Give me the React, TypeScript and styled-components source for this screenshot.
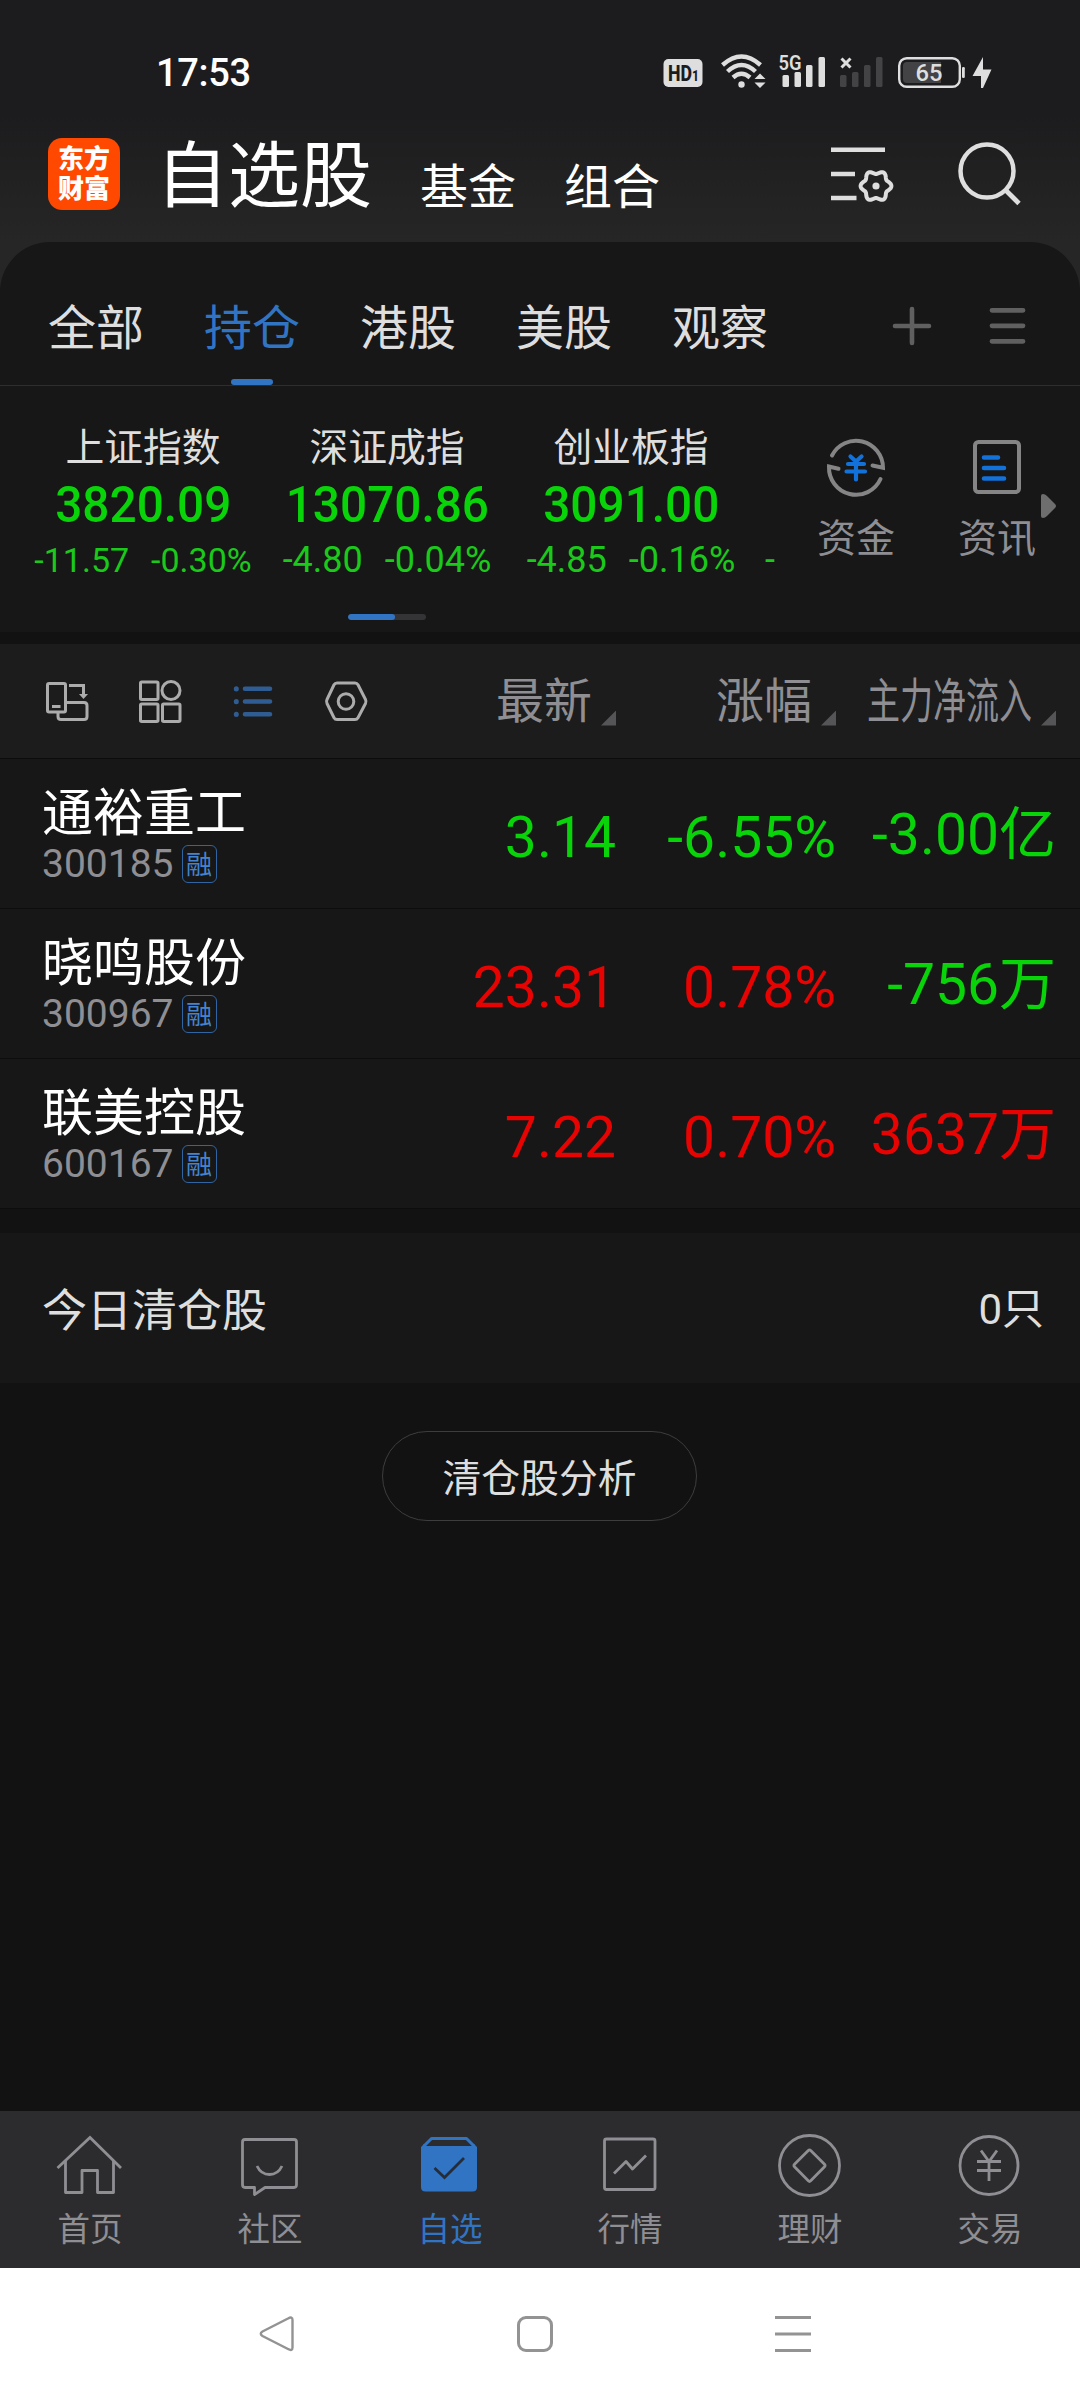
import React from "react";
import styled, { createGlobalStyle } from "styled-components";

const CJK = `"Noto Sans CJK SC", sans-serif`;
const NUM = `Roboto, "Noto Sans CJK SC", sans-serif`;

const color = {
  blue: "#3274c4",
  green: "#09d309",
  red: "#e60302",
  text: "#dedede",
  muted: "#8e8e93",
  panel: "#171717",
  page: "#121212",
};

const GlobalStyle = createGlobalStyle`
  * { box-sizing: border-box; }
  body { margin: 0; background: ${color.page}; }
  svg { display: block; flex: none; }
`;

const Screen = styled.div`
  width: 1080px;
  height: 2400px;
  display: flex;
  flex-direction: column;
  background: ${color.page};
  font-family: ${CJK};
  color: ${color.text};
  overflow: hidden;
  white-space: nowrap;
`;

/* ---------- top area ---------- */

const Top = styled.div`
  background: linear-gradient(#1c1c1e 0, #1c1c1e 112px, #262626 242px, #262626 300px);
`;

const StatusBar = styled.div`
  height: 115px;
  padding: 0 88px 0 156px;
  display: flex;
  justify-content: space-between;
`;

const Clock = styled.div`
  margin-top: 54px;
  font: 500 38px/38px ${NUM};
  letter-spacing: -0.3px;
  color: #fff;
`;

const Header = styled.header`
  height: 127px;
  display: flex;
  align-items: flex-start;
  padding-left: 48px;
`;

const Logo = styled.div`
  margin-top: 23px;
  width: 72px;
  height: 72px;
  border-radius: 14px;
  background: #ff4800;
  color: #fff;
  padding-top: 4px;
  text-align: center;
  font: 900 26px/30px ${CJK};
`;

const Title = styled.div<{ $size: number; $top: number; $left: number }>`
  margin: ${(p) => p.$top}px 0 0 ${(p) => p.$left}px;
  font-size: ${(p) => p.$size}px;
  line-height: ${(p) => p.$size}px;
  color: #fff;
`;

const HeaderIcons = styled.div`
  margin: 25px 0 0 auto;
  padding-right: 54px;
  display: flex;
  gap: 62px;
`;

/* ---------- groups + indices ---------- */

const Panel = styled.section`
  height: 390px;
  background: ${color.panel};
  border-radius: 50px 50px 0 0;
`;

const Tabs = styled.nav`
  height: 144px;
  border-bottom: 1px solid #2e2e2f;
  padding: 0 54px 0 48px;
  display: flex;
  gap: 60px;
`;

const Tab = styled.div<{ $active?: boolean }>`
  display: flex;
  flex-direction: column;
  align-items: center;
  justify-content: space-between;
  padding-top: 58px;
  font-size: 48px;
  line-height: 48px;
  color: ${(p) => (p.$active ? color.blue : color.text)};
`;

const TabMark = styled.div`
  width: 42px;
  height: 6px;
  border-radius: 3px;
  background: ${color.blue};
`;

const TabIcons = styled.div`
  margin: 63px 0 0 auto;
  display: flex;
  gap: 56px;
`;

const IndexArea = styled.div`
  height: 228px;
  display: flex;
`;

const IndexStrip = styled.div`
  width: 776px;
  padding-left: 21px;
  display: flex;
  overflow: hidden;
`;

const IndexCell = styled.div`
  flex: none;
  width: 244px;
  padding-top: 38px;
  display: flex;
  flex-direction: column;
  align-items: center;
`;

const IndexName = styled.div`
  font-size: 38.8px;
  line-height: 40px;
`;

const IndexValue = styled.div`
  margin-top: 17px;
  font: 500 49.5px/48px ${NUM};
  transform: scaleX(0.965);
  color: ${color.green};
`;

const IndexDelta = styled.div<{ $size?: number }>`
  margin-top: 14px;
  display: flex;
  gap: 22px;
  font: 400 ${(p) => p.$size ?? 36}px/34px ${NUM};
  color: #1bc91b;
`;

const Shortcut = styled.div<{ $left: number }>`
  margin-left: ${(p) => p.$left}px;
  padding-top: 48px;
  display: flex;
  flex-direction: column;
  align-items: center;
  gap: 16px;
  font-size: 39px;
  line-height: 39px;
  color: ${color.muted};
`;

const ScrollArrow = styled.div`
  margin: 108px 0 0 5px;
`;

const Pager = styled.div`
  width: 78px;
  height: 6px;
  margin: 0 0 0 348px;
  border-radius: 3px;
  background: #343436;
  overflow: hidden;
`;

const PagerThumb = styled.div`
  width: 47px;
  height: 6px;
  border-radius: 3px;
  background: ${color.blue};
`;

/* ---------- table ---------- */

const Toolbar = styled.div`
  margin-top: 12px;
  height: 115px;
  background: #1c1c1d;
  border-bottom: 1px solid #0c0c0c;
  padding: 0 24px 0 42px;
  display: flex;
  align-items: center;
`;

const ViewIcons = styled.div`
  display: flex;
  gap: 43px;
`;

const Columns = styled.div`
  margin-left: auto;
  display: grid;
  grid-template-columns: repeat(3, 220px);
`;

const ColumnHead = styled.div`
  display: flex;
  justify-content: flex-end;
  align-items: flex-end;
  gap: 9px;
  height: 49px;
  font-size: 48px;
  line-height: 48px;
  color: ${color.muted};
`;

const HeadLabel = styled.div<{ $squeeze?: boolean }>`
  height: 53px;
  width: ${(p) => (p.$squeeze ? "165px" : "auto")};
  transform: ${(p) => (p.$squeeze ? "scaleX(0.6875)" : "none")};
  transform-origin: left;
`;

const Corner = styled.div`
  width: 15px;
  height: 15px;
  background: #555558;
  clip-path: polygon(100% 0, 100% 100%, 0 100%);
`;

const Row = styled.div`
  height: 150px;
  background: ${color.panel};
  border-bottom: 1px solid #0d0d0d;
  padding: 0 24px 0 42px;
  display: flex;
`;

const StockName = styled.div`
  margin-top: 25px;
  font-size: 51px;
  line-height: 51px;
  color: #fff;
`;

const StockMeta = styled.div`
  margin-top: 10px;
  display: flex;
  align-items: center;
  gap: 8px;
  font: 400 39px/38px ${NUM};
  color: ${color.muted};
`;

const Tag = styled.div`
  width: 35px;
  height: 38px;
  border: 1.5px solid #2f65a3;
  border-radius: 6px;
  text-align: center;
  font: 400 26px/33px ${CJK};
  color: #4484cf;
`;

const Num = styled.div<{ $up?: boolean; $top?: number }>`
  text-align: right;
  padding-top: ${(p) => p.$top ?? 49.5}px;
  font: 400 57px/57px ${NUM};
  color: ${(p) => (p.$up ? color.red : color.green)};
`;

const ClearedRow = styled.div`
  margin-top: 24px;
  height: 150px;
  padding: 0 36px 0 42px;
  background: ${color.panel};
  display: flex;
  align-items: center;
  justify-content: space-between;
  font-size: 45px;
  line-height: 48px;
`;

const Count = styled.div`
  padding-top: 4px;
  font: 400 42px/48px ${NUM};
`;

const AnalyzeButton = styled.button`
  margin: 48px 0 0 382px;
  width: 315px;
  height: 90px;
  padding: 0 0 2px;
  border: 1px solid #3d3d3f;
  border-radius: 45px;
  background: none;
  color: ${color.text};
  font: 400 38.8px/40px ${CJK};
`;

/* ---------- bottom ---------- */

const BottomBar = styled.nav`
  margin-top: auto;
  height: 157px;
  background: #2c2c2e;
  display: grid;
  grid-template-columns: repeat(6, 180px);
`;

const BottomItem = styled.div<{ $active?: boolean }>`
  display: flex;
  flex-direction: column;
  align-items: center;
  padding-top: 20px;
  gap: 9px;
  font-size: 32.5px;
  line-height: 33px;
  color: ${(p) => (p.$active ? color.blue : color.muted)};
`;

const SystemNav = styled.div`
  height: 132px;
  padding: 45px 266px 0 256px;
  background: #fff;
  display: flex;
  justify-content: space-between;
`;

/* ---------- icons ---------- */

const StatusIcons = () => (
  <svg width="332" height="115" viewBox="660 0 332 115" fill="#dedede">
    <rect x="663.5" y="59" width="39" height="28" rx="5" />
    <text x="668" y="81" fontFamily="Roboto" fontWeight="800" fontSize="22" textLength="31" lengthAdjust="spacingAndGlyphs" fill="#1c1c1e">
      HD<tspan fontSize="15">1</tspan>
    </text>
    <g fill="none" stroke="#dedede" strokeWidth="4.4">
      <path d="M722.5 65 Q741.5 48 760.5 65" />
      <path d="M727.5 71.5 Q741.5 58.5 755.5 71.5" />
      <path d="M733 77.5 Q741.5 70 750 77.5" />
    </g>
    <circle cx="741.5" cy="84.5" r="3.2" />
    <path d="M754.5 79 L760 73.5 L765.5 79Z M754.5 82.5 L765.5 82.5 L760 88Z" />
    <text x="778.5" y="70" fontFamily="Roboto" fontWeight="600" fontSize="21" textLength="23" lengthAdjust="spacingAndGlyphs">5G</text>
    <rect x="782.5" y="75" width="6.5" height="12" rx="1.5" />
    <rect x="794.5" y="72" width="6.5" height="15" rx="1.5" />
    <rect x="806" y="65" width="6.5" height="22" rx="1.5" />
    <rect x="818.5" y="57" width="6.5" height="30" rx="1.5" />
    <path d="M841.5 58.5 L850.5 67.5 M850.5 58.5 L841.5 67.5" stroke="#dedede" strokeWidth="3" />
    <g fill="#434345">
      <rect x="840" y="75" width="6.5" height="12" rx="1.5" />
      <rect x="852" y="72" width="6.5" height="15" rx="1.5" />
      <rect x="864" y="65" width="6.5" height="22" rx="1.5" />
      <rect x="876" y="57" width="6.5" height="30" rx="1.5" />
    </g>
    <rect x="899.2" y="58.2" width="60.6" height="28.6" rx="7.5" fill="none" stroke="#dedede" strokeWidth="2.4" />
    <path d="M907 62 H941 V83 H907 Q903 83 903 79 V66 Q903 62 907 62Z" fill="#434345" />
    <rect x="962" y="67" width="2.8" height="11" rx="1.2" />
    <text x="915.5" y="81" fontFamily="Roboto" fontWeight="500" fontSize="24" textLength="27" lengthAdjust="spacingAndGlyphs">65</text>
    <path d="M983 57 L972.5 76 H981 L981 88 H983 L991.5 69.5 H983Z" />
  </svg>
);

const gearPath = (cx: number, cy: number) => {
  const pts: string[] = [];
  for (let i = 0; i < 120; i++) {
    const a = (i / 120) * Math.PI * 2;
    const r = 13.7 + 1.7 * Math.cos(6 * a);
    pts.push(`${(cx + r * Math.cos(a)).toFixed(2)} ${(cy + r * Math.sin(a)).toFixed(2)}`);
  }
  return `M${pts.join("L")}Z`;
};

const ListSettingsIcon = () => (
  <svg width="66" height="66" viewBox="830 140 66 66" fill="none" stroke="#dedede" strokeWidth="4.5">
    <path d="M831 149.7 H885 M831 174 H855 M831 198 H856.5" />
    <path d={gearPath(876, 186)} strokeWidth="4" strokeLinejoin="round" />
    <circle cx="876" cy="186" r="3.6" fill="#dedede" stroke="none" />
  </svg>
);

const SearchIcon = () => (
  <svg width="68" height="66" viewBox="958 140 68 66" fill="none" stroke="#dedede" strokeWidth="4.5">
    <circle cx="987" cy="171" r="26.5" />
    <path d="M1005.5 190 L1019 203.5" strokeWidth="4.8" />
  </svg>
);

const PlusIcon = () => (
  <svg width="42" height="42" viewBox="891 304.5 42 42" stroke="#606060" strokeWidth="4.6" strokeLinecap="round">
    <path d="M912 308.5 V342.5 M895 325.5 H929" />
  </svg>
);

const MenuIcon = () => (
  <svg width="37" height="42" viewBox="989.5 304.5 37 42" stroke="#606060" strokeWidth="4.8" strokeLinecap="round">
    <path d="M992.5 309.8 H1023.5 M992.5 325.3 H1023.5 M992.5 340.8 H1023.5" />
  </svg>
);

const FundIcon = () => (
  <svg width="66" height="66" viewBox="823 434 66 66" fill="none" stroke="#858585" strokeWidth="4">
    <path d="M832 455.5 A27 27.2 0 0 1 883 467.8 L872.5 465.5" strokeLinecap="round" />
    <path d="M880.5 479 A27 27.2 0 0 1 829 466.5 L838.5 468.7" strokeLinecap="round" />
    <path d="M850.5 456.5 L856 461.5 L861.5 456.5 M856 462 V479.5 M848 464 H864 M846.5 471.5 H865" stroke="#1272da" strokeWidth="4.2" strokeLinecap="round" />
  </svg>
);

const NewsIcon = () => (
  <svg width="66" height="66" viewBox="964 434 66 66" fill="none" stroke="#858585" strokeWidth="4">
    <rect x="975" y="442" width="44" height="50" rx="3.5" />
    <path d="M984 457.5 H998 M984 468 H1004 M984 478.5 H1004" stroke="#1272da" strokeWidth="4.6" strokeLinecap="round" />
  </svg>
);

const ArrowIcon = () => (
  <svg width="15" height="24" viewBox="0 0 15 24" fill="#6e6e6e">
    <path d="M0 2 Q0 0 2 0 Q4 0 6 2 L14 10 Q16 12 14 14 L6 22 Q4 24 2 24 Q0 24 0 22Z" />
  </svg>
);

const iconProps = { width: 50, height: 50, fill: "none", stroke: "#acacac", strokeWidth: 3 };

const RotateIcon = () => (
  <svg {...iconProps} viewBox="42 675.5 50 50">
    <rect x="47.5" y="683" width="18" height="28.5" rx="1.5" />
    <path d="M52 706 H60.5" />
    <path d="M66 702 H84 Q87 702 87 705 V716 Q87 719 84 719 H61 Q58 719 58 716 V712" />
    <path d="M69 685 H83.5 V695" />
    <path d="M79 693.5 H88 L83.5 698.5Z" fill="#acacac" stroke="none" />
  </svg>
);

const GridIcon = () => (
  <svg {...iconProps} viewBox="135 675.5 50 50">
    <rect x="140.5" y="681.5" width="17.5" height="17.5" rx="1.2" />
    <circle cx="171" cy="690" r="9" />
    <rect x="140.5" y="703.5" width="17.5" height="17.5" rx="1.2" />
    <rect x="162.5" y="703.5" width="17.5" height="17.5" rx="1.2" />
  </svg>
);

const ListIcon = () => (
  <svg {...iconProps} stroke="#2f5c92" viewBox="228 675.5 50 50" strokeWidth="4.6" strokeLinecap="round">
    <path d="M236.3 688.3 v.2 M236.3 701 v.2 M236.3 713.7 v.2" strokeWidth="5" />
    <path d="M245 688.3 H270 M245 701 H270 M245 713.7 H270" />
  </svg>
);

const HexIcon = () => (
  <svg {...iconProps} viewBox="321 675.5 50 50">
    <path d="M337 682.5 H355 Q357 682.5 358 684.3 L365.5 699 Q366.5 701 365.5 703 L358 717.2 Q357 719 355 719 H337 Q335 719 334 717.2 L327 703 Q326 701 327 699 L334 684.3 Q335 682.5 337 682.5Z" />
    <circle cx="346" cy="701" r="7.8" />
  </svg>
);

const navProps = { width: 70, height: 70, fill: "none", stroke: "currentColor", strokeWidth: 2.8 };

const HomeIcon = () => (
  <svg {...navProps} viewBox="55 2131 70 70">
    <path d="M57.5 2168 L90 2137.5 L121 2168" />
    <path d="M65.5 2161 V2192.5 H82 V2170.5 H97.5 V2192.5 H113.5 V2161" strokeLinejoin="round" />
  </svg>
);

const ChatIcon = () => (
  <svg {...navProps} viewBox="235 2131 70 70" strokeLinejoin="round">
    <path d="M245 2139.5 H294 Q296.5 2139.5 296.5 2142 V2184.5 Q296.5 2187.5 294 2187.5 H265 L254.5 2194.5 V2187.5 H245 Q242.5 2187.5 242.5 2184.5 V2142 Q242.5 2139.5 245 2139.5Z" />
    <path d="M257 2166 Q261 2174.5 269.5 2174.5 Q278 2174.5 282 2166" />
  </svg>
);

const PicksIcon = () => (
  <svg {...navProps} viewBox="415 2131 70 70">
    <path d="M424 2146 L431.5 2138.5 H466.5 L474 2146" strokeWidth="3" strokeLinejoin="round" />
    <path d="M421 2147 L424 2144 L426 2146 H472 L474 2144 L477 2147 V2187 Q477 2191.5 472.5 2191.5 H425.5 Q421 2191.5 421 2187Z" fill="currentColor" stroke="none" />
    <path d="M434.5 2168 L444.5 2177.5 L464 2158" stroke="#242e3b" />
  </svg>
);

const ChartIcon = () => (
  <svg {...navProps} viewBox="595 2131 70 70" strokeLinejoin="round">
    <rect x="604.5" y="2139" width="50.5" height="50.5" rx="2" />
    <path d="M614 2173.5 L626 2161.5 L632.5 2169 L646 2155.5" />
  </svg>
);

const WealthIcon = () => (
  <svg {...navProps} viewBox="775 2131 70 70" strokeLinejoin="round">
    <circle cx="809.5" cy="2165.5" r="30" />
    <path d="M808.3 2150.5 Q809.5 2149.3 810.7 2150.5 L824.5 2164.3 Q825.7 2165.5 824.5 2166.7 L810.7 2180.8 Q809.5 2182 808.3 2180.8 L794.5 2166.7 Q793.3 2165.5 794.5 2164.3Z" />
  </svg>
);

const TradeIcon = () => (
  <svg {...navProps} viewBox="955 2131 70 70">
    <circle cx="989" cy="2165.5" r="29" />
    <path d="M981 2150.5 L989 2161.5 L997 2150.5 M989 2161 V2181 M977 2161.5 H1001 M977 2170.5 H1001" />
  </svg>
);

const sysProps = { width: 42, height: 42, fill: "none", stroke: "#939393", strokeWidth: 3 };

/* ---------- data ---------- */

const groups = ["全部", "持仓", "港股", "美股", "观察"];

const indices = [
  { name: "上证指数", value: "3820.09", change: "-11.57", pct: "-0.30%", size: 34 },
  { name: "深证成指", value: "13070.86", change: "-4.80", pct: "-0.04%", size: 36 },
  { name: "创业板指", value: "3091.00", change: "-4.85", pct: "-0.16%", size: 36 },
];

const heads = ["最新", "涨幅", "主力净流入"];

const stocks = [
  { name: "通裕重工", code: "300185", price: "3.14", pct: "-6.55%", flow: "-3.00亿", up: false, flowUp: false },
  { name: "晓鸣股份", code: "300967", price: "23.31", pct: "0.78%", flow: "-756万", up: true, flowUp: false },
  { name: "联美控股", code: "600167", price: "7.22", pct: "0.70%", flow: "3637万", up: true, flowUp: true },
];

const bottomItems = [
  { label: "首页", Icon: HomeIcon },
  { label: "社区", Icon: ChatIcon },
  { label: "自选", Icon: PicksIcon },
  { label: "行情", Icon: ChartIcon },
  { label: "理财", Icon: WealthIcon },
  { label: "交易", Icon: TradeIcon },
];

export default function App() {
  return (
    <Screen>
      <GlobalStyle />
      <Top>
        <StatusBar>
          <Clock>17:53</Clock>
          <StatusIcons />
        </StatusBar>
        <Header>
          <Logo>
            东方
            <br />
            财富
          </Logo>
          <Title $size={72} $top={18.5} $left={36}>自选股</Title>
          <Title $size={48} $top={43.5} $left={48}>基金</Title>
          <Title $size={48} $top={43.5} $left={48}>组合</Title>
          <HeaderIcons>
            <ListSettingsIcon />
            <SearchIcon />
          </HeaderIcons>
        </Header>
        <Panel>
          <Tabs>
            {groups.map((g) => (
              <Tab key={g} $active={g === "持仓"}>
                {g}
                {g === "持仓" && <TabMark />}
              </Tab>
            ))}
            <TabIcons>
              <PlusIcon />
              <MenuIcon />
            </TabIcons>
          </Tabs>
          <IndexArea>
            <IndexStrip>
              {indices.map((x) => (
                <IndexCell key={x.name}>
                  <IndexName>{x.name}</IndexName>
                  <IndexValue>{x.value}</IndexValue>
                  <IndexDelta $size={x.size}>
                    <span>{x.change}</span>
                    <span>{x.pct}</span>
                  </IndexDelta>
                </IndexCell>
              ))}
              <IndexCell>
                <IndexName>&nbsp;</IndexName>
                <IndexValue>&nbsp;</IndexValue>
                <IndexDelta style={{ width: 220 }}>-</IndexDelta>
              </IndexCell>
            </IndexStrip>
            <Shortcut $left={41}>
              <FundIcon />
              资金
            </Shortcut>
            <Shortcut $left={63}>
              <NewsIcon />
              资讯
            </Shortcut>
            <ScrollArrow>
              <ArrowIcon />
            </ScrollArrow>
          </IndexArea>
          <Pager>
            <PagerThumb />
          </Pager>
        </Panel>
      </Top>

      <Toolbar>
        <ViewIcons>
          <RotateIcon />
          <GridIcon />
          <ListIcon />
          <HexIcon />
        </ViewIcons>
        <Columns>
          {heads.map((h) => (
            <ColumnHead key={h}>
              <HeadLabel $squeeze={h.length > 2}>{h}</HeadLabel>
              <Corner />
            </ColumnHead>
          ))}
        </Columns>
      </Toolbar>

      {stocks.map((s) => (
        <Row key={s.code}>
          <div>
            <StockName>{s.name}</StockName>
            <StockMeta>
              {s.code}
              <Tag>融</Tag>
            </StockMeta>
          </div>
          <Columns>
            <Num $up={s.up}>{s.price}</Num>
            <Num $up={s.up}>{s.pct}</Num>
            <Num $up={s.flowUp} $top={46.5}>{s.flow}</Num>
          </Columns>
        </Row>
      ))}

      <ClearedRow>
        今日清仓股
        <Count>0只</Count>
      </ClearedRow>
      <AnalyzeButton>清仓股分析</AnalyzeButton>

      <BottomBar>
        {bottomItems.map(({ label, Icon }) => (
          <BottomItem key={label} $active={label === "自选"}>
            <Icon />
            {label}
          </BottomItem>
        ))}
      </BottomBar>
      <SystemNav>
        <svg {...sysProps} viewBox="256 2313 42 42">
          <path d="M288 2318.5 Q292.5 2316 292.5 2320 V2347.5 Q292.5 2351.5 288 2349 L262.5 2336 Q259 2333.7 262.5 2331.5Z" strokeWidth="2.4" />
        </svg>
        <svg {...sysProps} viewBox="514 2313 42 42">
          <rect x="518.5" y="2317.5" width="33" height="33" rx="7.5" />
        </svg>
        <svg {...sysProps} viewBox="772 2313 42 42">
          <path d="M775 2317.5 H811 M775 2334 H811 M775 2350.5 H811" />
        </svg>
      </SystemNav>
    </Screen>
  );
}
